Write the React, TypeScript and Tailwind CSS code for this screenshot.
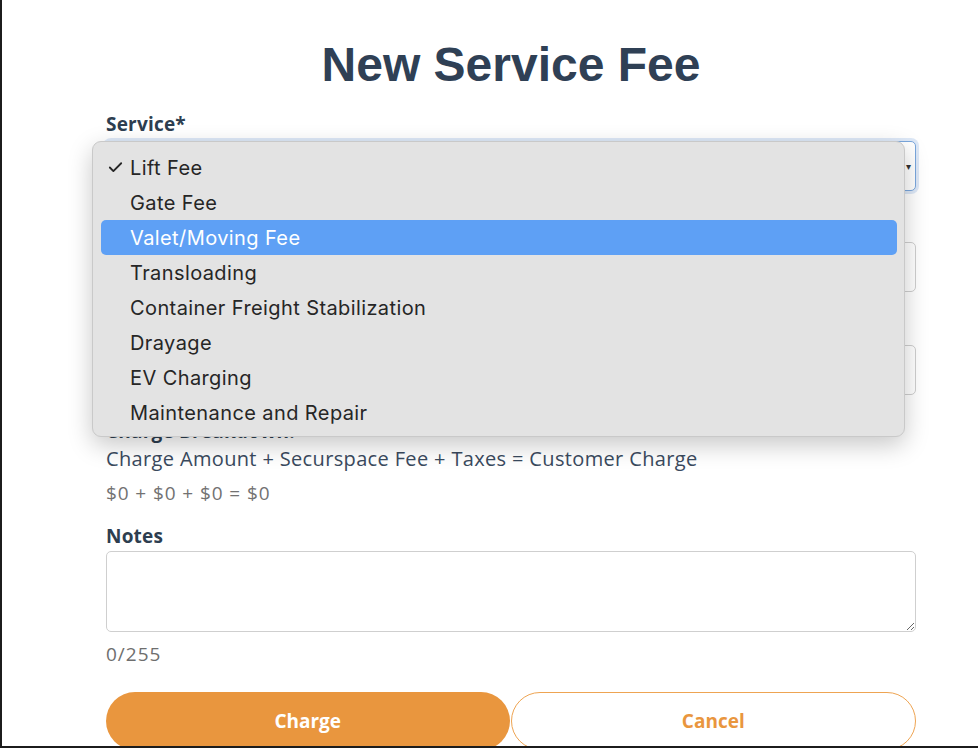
import { Check } from 'lucide-react';

const SERVICES = [
  'Lift Fee',
  'Gate Fee',
  'Valet/Moving Fee',
  'Transloading',
  'Container Freight Stabilization',
  'Drayage',
  'EV Charging',
  'Maintenance and Repair',
];

const formFont = { fontFamily: '"Open Sans", Lato, sans-serif' };

function FieldLabel({ children }: { children?: React.ReactNode }) {
  return (
    <div
      className="h-[24px] text-[19px] leading-[24px] font-bold tracking-[0.2px] text-[#2d3e50] mb-[5px]"
      style={formFont}
    >
      {children}
    </div>
  );
}

function ServiceMenu() {
  return (
    <div
      className="absolute left-[90px] top-[141px] w-[813px] h-[296px] rounded-[9px] bg-[#e3e3e3] border border-[#c9c9c9] shadow-[0_8px_24px_rgba(0,0,0,0.22)] pt-[8px] pl-[8px] pr-[7px]"
      style={{ fontFamily: 'Inter, "Liberation Sans", sans-serif' }}
    >
      {SERVICES.map((name, i) => {
        const active = i === 2;
        return (
          <div
            key={name}
            className={`relative h-[35px] flex items-center pl-[29px] rounded-[5px] text-[20px] tracking-[0.4px] ${
              active ? 'bg-[#5ea0f5] text-white' : 'text-[#262626]'
            }`}
          >
            {i === 0 && (
              <Check className="absolute left-[6px] top-[9px] w-[17px] h-[17px] text-[#262626]" strokeWidth={2.6} />
            )}
            {name}
          </div>
        );
      })}
    </div>
  );
}

export default function App() {
  return (
    <div className="relative w-[978px] h-[748px] overflow-hidden bg-white border-l-2 border-b-2 border-[#1c1c1c]">
      <div className="w-[810px] ml-[104px]">
        <h1
          className="mt-[41px] text-center text-[48px] leading-[48px] font-bold text-[#2f4055]"
          style={{ fontFamily: '"Liberation Sans", Arial, sans-serif' }}
        >
          New Service Fee
        </h1>

        {/* Service */}
        <div className="mt-[23px]">
          <FieldLabel>Service*</FieldLabel>
          <div className="h-[50px] rounded-[5px] border border-[#7aa7dd] shadow-[0_0_0_3px_rgba(120,165,225,0.25)] bg-white flex items-center justify-end pr-[4px]">
            <span className="text-[10px] text-[#333]">▾</span>
          </div>
        </div>

        {/* fields hidden behind the open menu */}
        <div className="mt-[22px]">
          <FieldLabel />
          <div className="h-[50px] rounded-[5px] border border-[#cfcfcf] bg-white" />
        </div>

        <div className="mt-[24px]">
          <FieldLabel />
          <div className="h-[50px] rounded-[5px] border border-[#cfcfcf] bg-white" />
        </div>

        {/* Breakdown */}
        <div className="mt-[24px]" style={formFont}>
          <div className="text-[19px] leading-[24px] font-bold tracking-[0.2px] text-[#2d3e50] mb-[4px]">
            Charge Breakdown:
          </div>
          <div className="text-[20px] leading-[24px] tracking-[0.35px] text-[#3a4a5e]">
            Charge Amount + Securspace Fee + Taxes = Customer Charge
          </div>
          <div className="mt-[10px] text-[19px] leading-[24px] tracking-[0.9px] text-[#727272]">$0 + $0 + $0 = $0</div>
        </div>

        {/* Notes */}
        <div className="mt-[19px]">
          <FieldLabel>Notes</FieldLabel>
          <textarea className="block w-full h-[81px] -mt-[2px] rounded-[5px] border border-[#cfcfcf] bg-white resize-y" />
          <div className="mt-[10px] text-[19px] leading-[24px] tracking-[1px] text-[#6e6e6e]" style={formFont}>
            0/255
          </div>
        </div>

        {/* Actions */}
        <div className="mt-[26px] flex gap-[1px]" style={formFont}>
          <button className="flex-1 h-[58px] rounded-full bg-[#e9963e] text-white text-[19px] font-bold">
            Charge
          </button>
          <button className="flex-1 h-[58px] rounded-full border-[1.5px] border-[#eea452] bg-white text-[#e9963e] text-[19px] font-bold">
            Cancel
          </button>
        </div>
      </div>

      <ServiceMenu />
    </div>
  );
}
